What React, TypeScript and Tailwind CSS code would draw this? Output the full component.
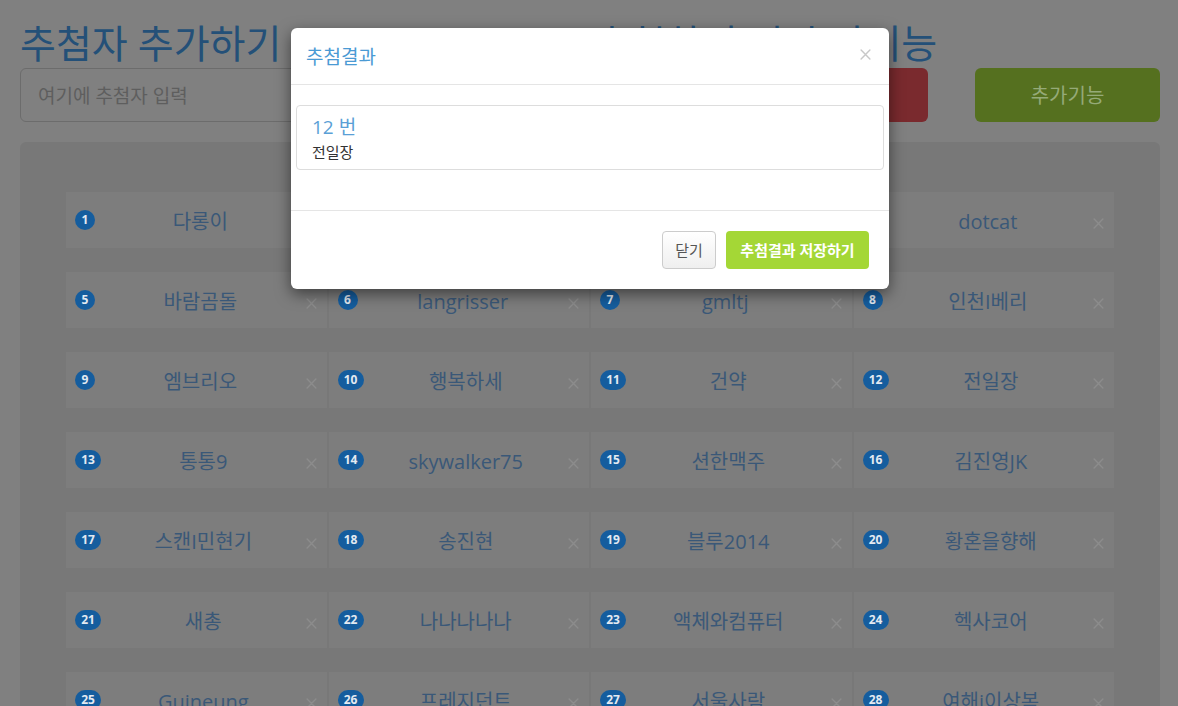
import React from "react";

const names: string[] = [
  "다롱이", "해피데이", "노을빛", "dotcat",
  "바람곰돌", "langrisser", "gmltj", "인천I베리",
  "엠브리오", "행복하세", "건약", "전일장",
  "통통9", "skywalker75", "션한맥주", "김진영JK",
  "스캔I민현기", "송진현", "블루2014", "황혼을향해",
  "새총", "나나나나나", "액체와컴퓨터", "헥사코어",
  "Guineung", "프레지던트", "서울사람", "여해i이상복",
];

function Cross({ size, color, width }: { size: number; color: string; width: number }) {
  return (
    <svg width={size} height={size} viewBox="0 0 10 10" fill="none" stroke={color} strokeWidth={width} strokeLinecap="round">
      <path d="M1 1 L9 9 M9 1 L1 9" />
    </svg>
  );
}

function Cell({ n, name }: { n: number; name: string }) {
  return (
    <div className="flex h-[56px] items-center bg-[#7d7d7d] pl-[9px] pr-[10px]">
      <span
        className={
          "flex h-[20px] items-center justify-center rounded-full bg-[#155d9e] text-[12px] font-bold leading-none text-[#e3eaf2] " +
          (n < 10 ? "w-[20px]" : "w-[26px]")
        }
      >
        {n}
      </span>
      <span className="flex-1 pt-[3px] text-center text-[20px] leading-[26px] text-[#3a5878]">{name}</span>
      <span className="mt-[6px]">
        <Cross size={11} color="#8c8c8c" width={1.3} />
      </span>
    </div>
  );
}

export default function App() {
  return (
    <div
      className="relative h-[706px] w-full overflow-hidden bg-[#808080]"
      style={{ fontFamily: '"Open Sans", "Noto Sans CJK KR", sans-serif' }}
    >
      <div className="pl-5 pr-[18px] pt-[20px]">
        <div className="grid grid-cols-2 gap-[8px]">
          <div>
            <h1 className="mb-[2px] h-[46px] text-[39px] leading-[46px] text-[#245078]">추첨자 추가하기</h1>
            <div className="flex h-[54px] items-center rounded-md border border-[#6c6c6c] px-[17px] pt-[3px] text-[19px] text-[#5e5e5e]">
              여기에 추첨자 입력
            </div>
          </div>
          <div>
            <h1 className="mb-[2px] h-[46px] text-[39px] leading-[46px] text-[#245078]">추첨하기 및 추가기능</h1>
            <div className="flex gap-[47px]">
              <div className="flex h-[54px] flex-1 items-center justify-center rounded-md bg-[#7a2a2e] text-[20px] text-[#b39496]">
                추첨하기
              </div>
              <div className="flex h-[54px] w-[185px] items-center justify-center rounded-md bg-[#55701f] pt-[2px] text-[20px] text-[#95aa78]">
                추가기능
              </div>
            </div>
          </div>
        </div>

        <div className="mt-[20px] rounded-md bg-[#787878] px-[46px] pb-[40px] pt-[50px]">
          <div className="grid grid-cols-4 gap-x-[2px] gap-y-[24px]">
            {names.map((name, i) => (
              <Cell key={i} n={i + 1} name={name} />
            ))}
          </div>
        </div>
      </div>

      {/* modal */}
      <div className="absolute inset-0 flex justify-center pl-[2px]">
        <div className="mt-[28px] h-fit w-[598px] rounded-[6px] bg-white shadow-[0_5px_15px_rgba(0,0,0,0.5)]">
          <div className="flex h-[57px] items-center justify-between border-b border-[#e5e5e5] pl-[15px] pr-[18px]">
            <span className="pt-[2px] text-[19px] leading-[24px] text-[#4a9ad4]">추첨결과</span>
            <span className="-mt-[4px]">
              <Cross size={11} color="#c8c8c8" width={1.3} />
            </span>
          </div>
          <div className="px-[5px] pb-[40px] pt-[20px]">
            <div className="h-[65px] rounded-[4px] border border-[#dddddd] px-[15px] pt-[9px]">
              <div className="text-[19px] leading-[24px] text-[#5a9fd6]">12 번</div>
              <div className="mt-[3px] text-[15px] leading-[20px] text-[#333333]">전일장</div>
            </div>
          </div>
          <div className="flex justify-end gap-[10px] border-t border-[#e5e5e5] px-[20px] pb-[20px] pt-[20px]">
            <div className="flex h-[38px] w-[54px] items-center justify-center rounded-[4px] border border-[#cccccc] bg-gradient-to-b from-white to-[#efefef] text-[15px] text-[#555555]">
              닫기
            </div>
            <div className="flex h-[38px] w-[143px] items-center justify-center rounded-[4px] bg-[#a4d736] text-[15px] font-bold text-white">
              추첨결과 저장하기
            </div>
          </div>
        </div>
      </div>
    </div>
  );
}
